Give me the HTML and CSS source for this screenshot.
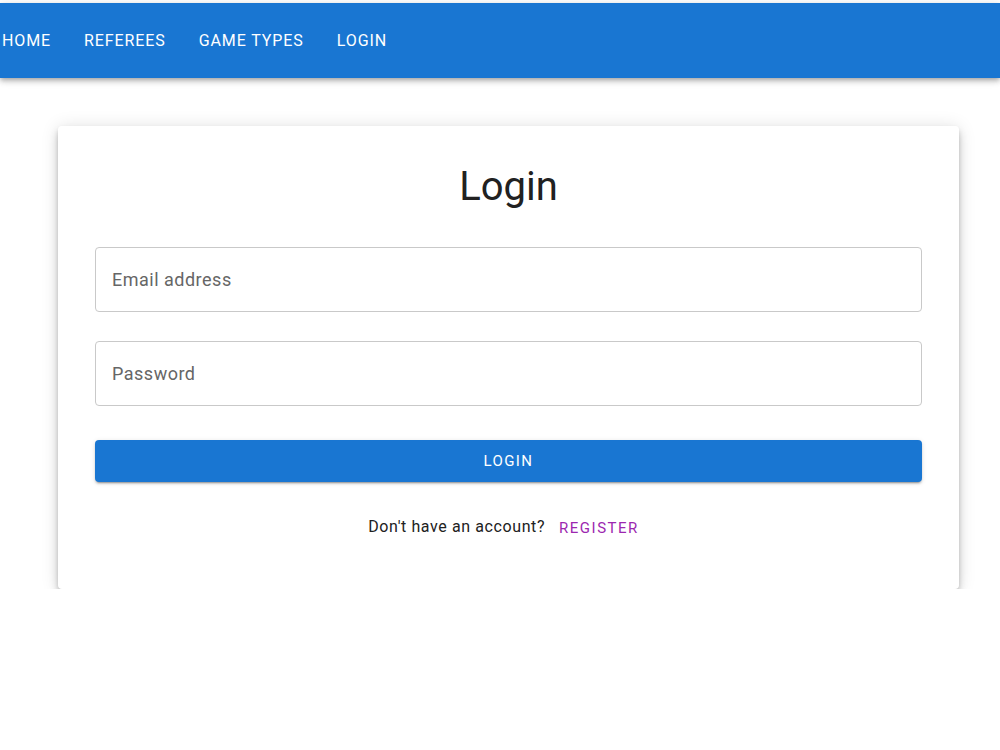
FILE: index.html
```html
<!DOCTYPE html>
<html lang="en">
<head>
    <meta charset="UTF-8">
    <meta name="viewport" content="width=device-width, initial-scale=1.0">
    <title>Login</title>
    <link rel="stylesheet" href="styles.css">
</head>
<body>

    <header class="appbar">
        <nav class="nav">
            <a class="nav-link" href="#">Home</a>
            <a class="nav-link" href="#">Referees</a>
            <a class="nav-link" href="#">Game Types</a>
            <a class="nav-link" href="#">Login</a>
        </nav>
    </header>

    <main class="card">
        <h1 class="title">Login</h1>
        <form class="form">
            <input class="field" type="email" placeholder="Email address">
            <input class="field" type="password" placeholder="Password">
            <button class="submit" type="button">Login</button>
        </form>
        <p class="footer">
            <span>Don't have an account?</span>
            <a class="register" href="#">Register</a>
        </p>
    </main>

</body>
</html>
```

FILE: styles.css
```css
body {
    background-color: #fff;
    color: #212121;
    font-family: 'Roboto', 'Liberation Sans', sans-serif;
    margin: 0;
    padding: 0;
}
.appbar {
    background-color: #1976d2;
    margin-top: 3px;
    height: 75px;
    display: flex;
    align-items: center;
    box-shadow: 0 2px 4px -1px rgba(0,0,0,0.2), 0 4px 5px 0 rgba(0,0,0,0.14), 0 1px 10px 0 rgba(0,0,0,0.12);
}
.nav {
    display: flex;
    gap: 33px;
    padding-left: 2px;
}
.nav-link {
    color: #fff;
    text-decoration: none;
    text-transform: uppercase;
    font-size: 16px;
    letter-spacing: 0.9px;
}
.card {
    margin: 48px 41px 0 58px;
    padding: 37px 37px 49px;
    border-radius: 4px;
    box-shadow: 0 3px 5px -1px rgba(0,0,0,0.2), 0 6px 10px 0 rgba(0,0,0,0.14), 0 1px 18px 0 rgba(0,0,0,0.12);
}
.title {
    margin: 0 0 36px;
    font-size: 40px;
    font-weight: 400;
    line-height: 48px;
    text-align: center;
}
.form {
    display: flex;
    flex-direction: column;
}
.field {
    height: 65px;
    box-sizing: border-box;
    border: 1px solid #c9c9c9;
    border-radius: 4px;
    padding: 0 16px;
    font-family: inherit;
    font-size: 18px;
    letter-spacing: 0.5px;
    color: #212121;
    margin-bottom: 29px;
}
.field::placeholder {
    color: #666;
}
.field + .field {
    margin-bottom: 34px;
}
.submit {
    height: 42px;
    border: none;
    border-radius: 4px;
    background-color: #1976d2;
    color: #fff;
    font-family: inherit;
    font-size: 15px;
    text-transform: uppercase;
    letter-spacing: 1.4px;
    box-shadow: 0 3px 1px -2px rgba(0,0,0,0.2), 0 2px 2px 0 rgba(0,0,0,0.14), 0 1px 5px 0 rgba(0,0,0,0.12);
}
.footer {
    margin: 32px 0 0;
    padding-right: 10px;
    display: flex;
    justify-content: center;
    align-items: center;
    gap: 14px;
    font-size: 16px;
    letter-spacing: 0.6px;
    line-height: 24px;
}
.register {
    color: #9c27b0;
    text-decoration: none;
    text-transform: uppercase;
    font-size: 15px;
    letter-spacing: 1.5px;
    padding-top: 2px;
}
```
